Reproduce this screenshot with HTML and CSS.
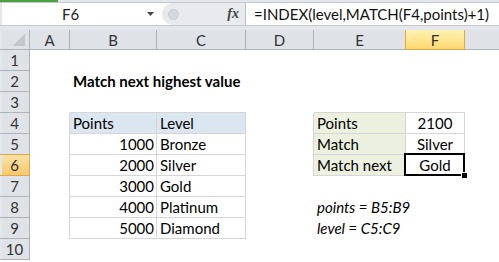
FILE: index.html
```html
<!DOCTYPE html>
<html lang="en">
<head>
  <meta charset="UTF-8">
  <title>Match next highest value</title>
  <link rel="stylesheet" href="styles.css">
</head>
<body>

<div class="app">
  <div class="ribbon-edge"><span class="tab-mark"></span></div>

  <div class="formula-bar">
    <div class="name-box">
      <span class="ref">F6</span>
      <svg class="drop" width="7" height="4" viewBox="0 0 7 4"><path d="M0 0h7L3.5 4z" fill="#444"/></svg>
    </div>
    <div class="fx-pill">
      <span class="knob"></span>
      <span class="fx">fx</span>
    </div>
    <div class="formula">=INDEX(level,MATCH(F4,points)+1)</div>
  </div>
  <div class="bar-gap"></div>

  <div class="sheet" id="sheet"></div>
</div>

<script>
// visible column letters; the last grid column is the edge of G, label off-screen
const cols = ['A', 'B', 'C', 'D', 'E', 'F', 'G'];
const rowCount = 10;
const activeCol = 'F';
const activeRow = 6;

const cells = {
  B2: { text: 'Match next highest value', cls: 'title' },
  B4: { text: 'Points', cls: 'tbl thead' },
  C4: { text: 'Level', cls: 'tbl thead' },
  B5: { text: '1000', cls: 'tbl num' }, C5: { text: 'Bronze', cls: 'tbl' },
  B6: { text: '2000', cls: 'tbl num' }, C6: { text: 'Silver', cls: 'tbl' },
  B7: { text: '3000', cls: 'tbl num' }, C7: { text: 'Gold', cls: 'tbl' },
  B8: { text: '4000', cls: 'tbl num' }, C8: { text: 'Platinum', cls: 'tbl' },
  B9: { text: '5000', cls: 'tbl num' }, C9: { text: 'Diamond', cls: 'tbl' },
  E4: { text: 'Points', cls: 'tbl label' }, F4: { text: '2100', cls: 'tbl center' },
  E5: { text: 'Match', cls: 'tbl label' }, F5: { text: 'Silver', cls: 'tbl center' },
  E6: { text: 'Match next', cls: 'tbl label' }, F6: { text: 'Gold', cls: 'tbl center active' },
  E8: { text: 'points = B5:B9', cls: 'note' },
  E9: { text: 'level = C5:C9', cls: 'note' }
};

// cells that draw the outer left / top edge of a bordered table
const leftEdge = ['A4','A5','A6','A7','A8','A9','D4','D5','D6'];
const topEdge = ['B3','C3','E3','F3'];

const sheet = document.getElementById('sheet');
let html = '<div class="corner"></div>';

cols.forEach(c => {
  const label = c === 'G' ? '' : c;
  html += `<div class="col-head${c === activeCol ? ' sel' : ''}">${label}</div>`;
});

for (let r = 1; r <= rowCount; r++) {
  html += `<div class="row-head${r === activeRow ? ' sel' : ''}">${r}</div>`;
  cols.forEach(c => {
    const id = c + r;
    const cell = cells[id];
    let cls = 'cell';
    if (cell) cls += ' ' + cell.cls;
    if (leftEdge.includes(id)) cls += ' edge-r';
    if (topEdge.includes(id)) cls += ' edge-b';
    let inner = cell ? `<span>${cell.text}</span>` : '';
    if (cell && cell.cls.includes('active')) {
      inner += '<span class="sel-box"></span><span class="fill-handle"></span>';
    }
    html += `<div class="${cls}">${inner}</div>`;
  });
}

sheet.innerHTML = html;
</script>

</body>
</html>
```

FILE: styles.css
```css
body {
  margin: 0;
  font-family: Lato, 'Liberation Sans', sans-serif;
  font-size: 15px;
  color: #000;
  background: #fff;
}
.app {
  width: 499px;
  height: 262px;
  overflow: hidden;
  background: #fff;
}
.ribbon-edge {
  height: 2px;
  background: #e3e6ea;
}
.tab-mark {
  display: block;
  width: 58px;
  height: 2px;
  background: #4aa23e;
}

/* formula bar */
.formula-bar {
  display: flex;
  height: 22px;
  padding-left: 2px;
  background: #fff;
  border-top: 1px solid #c5c9ce;
  border-bottom: 1px solid #c5c9ce;
  box-shadow: inset 2px 0 0 #e3e6ea;
}
.name-box {
  width: 158px;
  display: flex;
  align-items: center;
}
.name-box .ref {
  flex: 1;
  text-align: center;
  font-size: 15px;
  color: #222;
  padding-right: 8px;
}
.name-box .drop {
  margin-right: 6px;
}
.fx-pill {
  width: 84px;
  margin-left: 2px;
  background: #e8eaed;
  border-radius: 11px 0 0 11px;
  border-right: 1px solid #b9bdc2;
  display: flex;
  align-items: center;
  justify-content: space-between;
  padding: 0 6px;
  box-sizing: border-box;
}
.knob {
  width: 9px;
  height: 9px;
  border-radius: 50%;
  background: #d4d7db;
  border: 1px solid #c6c9cd;
}
.fx {
  font-family: 'Liberation Serif', serif;
  font-style: italic;
  font-weight: bold;
  font-size: 14px;
  color: #444;
}
.formula {
  padding-left: 8px;
  line-height: 22px;
  font-size: 15px;
  color: #111;
  white-space: nowrap;
}
.bar-gap {
  height: 4px;
  background: #e3e6ea;
}

/* grid */
.sheet {
  display: grid;
  grid-template-columns: 30px 40px 87px 89px 68px 92px 59px 80px;
  grid-template-rows: 20px repeat(10, 21px);
  background: #fff;
}
.corner,
.col-head,
.row-head {
  background: #dfe3e8;
  border-right: 1px solid #aeb3b9;
  border-bottom: 1px solid #aeb3b9;
  box-sizing: border-box;
  color: #333;
  font-size: 15px;
  display: flex;
  align-items: center;
  justify-content: center;
}
.corner {
  position: relative;
  box-shadow: inset 2px 0 0 #e3e6ea;
}
.corner::after {
  content: '';
  position: absolute;
  right: 4px;
  bottom: 3px;
  width: 12px;
  height: 12px;
  background: linear-gradient(135deg, transparent 50%, #c4c8cd 50%);
}
.row-head {
  box-shadow: inset 2px 0 0 #e3e6ea;
}
.col-head.sel {
  background: linear-gradient(#fff2b3, #fcd870);
  border-left: 1px solid #e3a648;
  border-right: 1px solid #e3a648;
  border-bottom: 1px solid #e3a648;
  margin-left: -1px;
}
.row-head.sel {
  background: linear-gradient(#fbe3a7, #f6c96a);
  border-top: 1px solid #e3a648;
  border-bottom: 1px solid #e3a648;
  border-right: 1px solid #e3a648;
  margin-top: -1px;
}

.cell {
  box-sizing: border-box;
  padding: 0 3px;
  line-height: 21px;
  white-space: nowrap;
  position: relative;
}
.cell.tbl {
  border-right: 1px solid #d6d6d6;
  border-bottom: 1px solid #d6d6d6;
}
.cell.edge-r {
  border-right: 1px solid #d6d6d6;
}
.cell.edge-b {
  border-bottom: 1px solid #d6d6d6;
}
.thead {
  background: #dce6f1;
}
.label {
  background: #ebf1de;
}
.num {
  text-align: right;
  padding-right: 2px;
}
.center {
  text-align: center;
}
.title {
  font-weight: bold;
  overflow: visible;
}
.note {
  font-style: italic;
}

/* selected cell */
.sel-box {
  position: absolute;
  left: -2px;
  top: -2px;
  right: -1px;
  bottom: -1px;
  border: 2px solid #000;
}
.fill-handle {
  position: absolute;
  right: -4px;
  bottom: -4px;
  width: 5px;
  height: 5px;
  background: #000;
  border: 1px solid #fff;
  z-index: 1;
}
```
